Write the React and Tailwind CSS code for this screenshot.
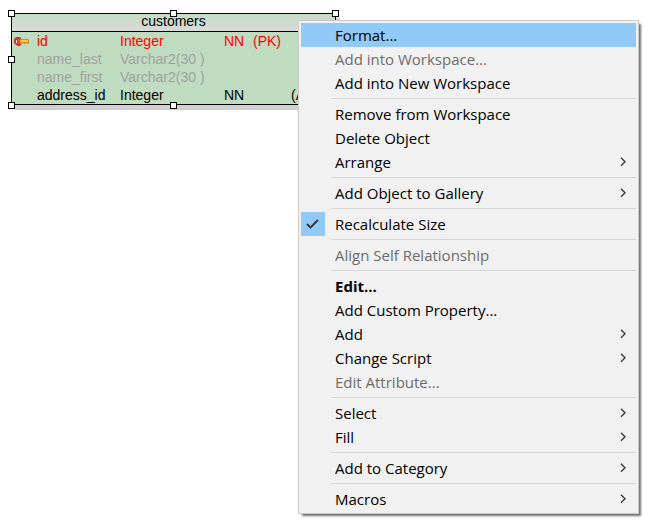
import React from "react";

const columns = [
  { name: "id", type: "Integer", nn: "NN", pk: "(PK)", extra: "", tone: "text-[#ff0000]", isKey: true },
  { name: "name_last", type: "Varchar2(30 )", nn: "", pk: "", extra: "", tone: "text-[#a0a0a0]" },
  { name: "name_first", type: "Varchar2(30 )", nn: "", pk: "", extra: "", tone: "text-[#a0a0a0]" },
  { name: "address_id", type: "Integer", nn: "NN", pk: "", extra: "(AK1)", tone: "text-black" },
];

const menuGroups = [
  [{ label: "Format...", active: true }, { label: "Add into Workspace...", disabled: true }, { label: "Add into New Workspace" }],
  [{ label: "Remove from Workspace" }, { label: "Delete Object" }, { label: "Arrange", submenu: true }],
  [{ label: "Add Object to Gallery", submenu: true }],
  [{ label: "Recalculate Size", checked: true }],
  [{ label: "Align Self Relationship", disabled: true }],
  [
    { label: "Edit...", bold: true },
    { label: "Add Custom Property..." },
    { label: "Add", submenu: true },
    { label: "Change Script", submenu: true },
    { label: "Edit Attribute...", disabled: true },
  ],
  [{ label: "Select", submenu: true }, { label: "Fill", submenu: true }],
  [{ label: "Add to Category", submenu: true }],
  [{ label: "Macros", submenu: true }],
];

function KeyIcon() {
  return (
    <svg className="ml-[2px] block" width="16" height="10" viewBox="0 0 16 10" aria-hidden="true">
      <path d="M2 1h4l1 1v7l-1 1H4L2 9 0 7V3z" fill="#cf3328" />
      <path d="M2 4h1v3H2z" fill="#f4e4dc" />
      <path d="M4.500 3v5" stroke="#e8705c" />
      <path d="M6 3h8l1 1v4h-2V7h-1v1h-2V7H9v1H6z" fill="#d0921a" />
      <path d="M6 4h8v2H6z" fill="#fdc93c" />
    </svg>
  );
}

function Handle({ place }) {
  return <span className={`absolute size-[7px] border border-black bg-white ${place}`} />;
}

function Entity() {
  return (
    <section className="relative w-[325px] font-['Liberation_Sans',Arial,sans-serif] text-[14px] leading-[18px]">
      <div className="border border-black bg-[#c0dcc0] shadow-[4px_5px_0_0_#d0d0d0]">
        <h1 className="h-[18px] border-b border-black bg-linear-to-b from-[#c6dcc6] to-[#dadada] text-center leading-[14px]">
          customers
        </h1>
        <table className="w-full table-fixed border-collapse">
          <colgroup>
            <col className="w-[25px]" />
            <col className="w-[83px]" />
            <col className="w-[104px]" />
            <col className="w-[29px]" />
            <col className="w-[38px]" />
            <col />
          </colgroup>
          <tbody>
            {columns.map((c) => (
              <tr key={c.name} className={`h-[18px] whitespace-nowrap ${c.tone}`}>
                <td className="p-0">{c.isKey && <KeyIcon />}</td>
                <td className="p-0">{c.name}</td>
                <td className="p-0">{c.type}</td>
                <td className="p-0">{c.nn}</td>
                <td className="p-0">{c.pk}</td>
                <td className="p-0">{c.extra}</td>
              </tr>
            ))}
          </tbody>
        </table>
      </div>
      <Handle place="-left-[3px] -top-[3px]" />
      <Handle place="left-[159px] -top-[3px]" />
      <Handle place="-right-[3px] -top-[3px]" />
      <Handle place="-left-[3px] top-[43px]" />
      <Handle place="-right-[3px] top-[43px]" />
      <Handle place="-left-[3px] -bottom-[4px]" />
      <Handle place="left-[159px] -bottom-[4px]" />
      <Handle place="-right-[3px] -bottom-[4px]" />
    </section>
  );
}

function MenuItem({ label, active, disabled, bold, checked, submenu }) {
  return (
    <button
      type="button"
      role={checked ? "menuitemcheckbox" : "menuitem"}
      aria-checked={checked}
      aria-haspopup={submenu ? "menu" : undefined}
      disabled={disabled}
      className={`flex h-6 w-full items-center text-left ${active ? "bg-[#91c9f7]" : ""} ${
        disabled ? "text-[#6d6d6d]" : "text-black"
      } ${bold ? "font-bold" : ""}`}
    >
      <span className={`mr-[10px] flex size-6 shrink-0 items-center justify-center ${checked ? "bg-[#91c9f7]" : ""}`}>
        {checked && (
          <svg width="14" height="12" viewBox="0 0 14 12" fill="none" stroke="#333" strokeWidth="1.8" aria-hidden="true">
            <path d="M1 6l3.500 3.500 7.500-7.500" />
          </svg>
        )}
      </span>
      <span className="flex-1 whitespace-nowrap">{label}</span>
      {submenu && (
        <svg className="mr-[9px]" width="7" height="10" viewBox="0 0 7 10" fill="none" stroke="#444" strokeWidth="1.5" aria-hidden="true">
          <path d="M1 0.800l4 4-4 4" />
        </svg>
      )}
    </button>
  );
}

function ContextMenu() {
  return (
    <div
      role="menu"
      className="absolute left-[298px] top-[20px] w-[341px] border border-[#cccccc] bg-[#f1f1f1] p-[2px] font-['Open_Sans','Noto_Sans',sans-serif] text-[15px] leading-6 shadow-[3px_3px_2px_-1px_#707070]"
    >
      {menuGroups.map((group, i) => (
        <React.Fragment key={group[0].label}>
          {i > 0 && <div role="separator" className="my-[3px] ml-[30px] h-px bg-[#d7d7d7]" />}
          {group.map((item) => (
            <MenuItem key={item.label} {...item} />
          ))}
        </React.Fragment>
      ))}
    </div>
  );
}

export default function App() {
  return (
    <main className="relative min-h-screen overflow-hidden bg-white pl-[11px] pt-[13px]">
      <Entity />
      <ContextMenu />
    </main>
  );
}
